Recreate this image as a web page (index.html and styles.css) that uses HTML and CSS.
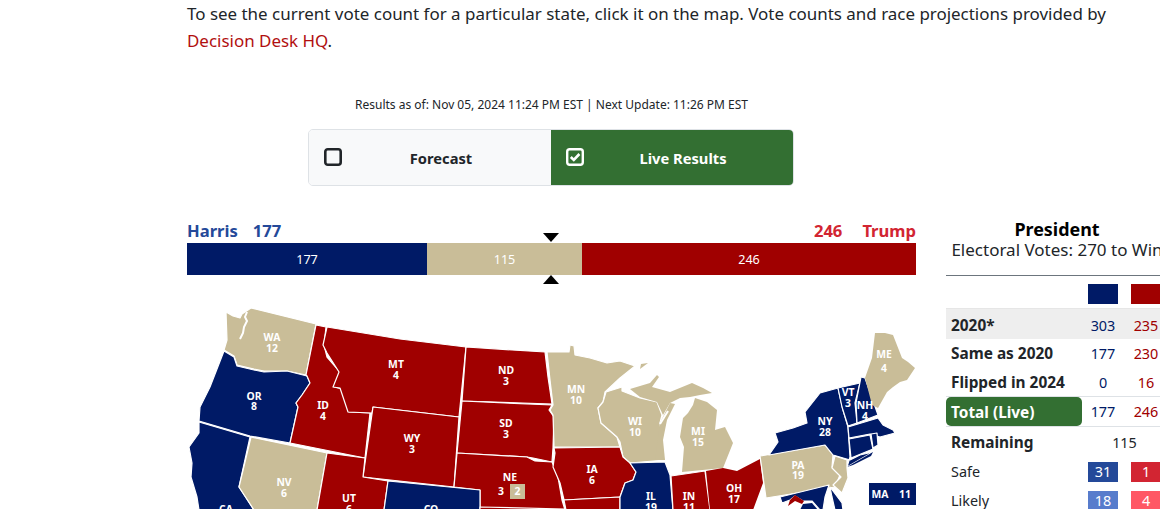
FILE: index.html
```html
<!DOCTYPE html>
<html lang="en">
<head>
<meta charset="utf-8">
<title>Live Results</title>
<link rel="stylesheet" href="styles.css">
</head>
<body>
<main class="page">
  <p class="intro">To see the current vote count for a particular state, click it on the map. Vote counts and race projections provided by <a href="#">Decision Desk HQ</a>.</p>
  <p class="asof">Results as of: Nov 05, 2024 11:24 PM EST | Next Update: 11:26 PM EST</p>
  <div class="toggle">
    <div class="opt opt-off">
      <svg class="check" viewBox="0 0 18 18"><rect x="1.3" y="1.3" width="15.4" height="15.4" rx="2.5" fill="none" stroke="#212529" stroke-width="2.6"/></svg>
      <span>Forecast</span>
    </div>
    <div class="opt opt-on">
      <svg class="check" viewBox="0 0 18 18"><rect x="1.2" y="1.2" width="15.6" height="15.6" rx="2.5" fill="none" stroke="#fff" stroke-width="2.4"/><path d="M4.8 9l3 3 5.6-6" fill="none" stroke="#fff" stroke-width="2.6"/></svg>
      <span>Live Results</span>
    </div>
  </div>
  <div class="columns">
    <section class="left">
      <div class="names">
        <div class="harris"><span>Harris</span><span>177</span></div>
        <div class="trump"><span>246</span><span>Trump</span></div>
      </div>
      <div class="bar">
        <div class="seg seg-d">177</div>
        <div class="seg seg-t">115</div>
        <div class="seg seg-r">246</div>
        <i class="mark mark-top"></i>
        <i class="mark mark-bot"></i>
      </div>
      <svg class="map" viewBox="187 300 729 209" width="729" height="209">
        <g class="states">
          <polygon class="t" points="226,312 233,316 240,318 242,314 251,308 316,324 306,375 287,371 264,371 254,369 237,365 234,356 224,350 227,340"/>
          <path class="inlet" d="M247,312l-2,5 2,4-3,6-1,6-3,6"/>
          <polygon class="d" points="224,351 234,357 237,366 254,370 264,372 287,371 307,376 310,383 302,395 296,403 298,407 290,443 250,436 199,421 200,407 210,387"/>
          <polygon class="d" points="199,422 250,437 239,487 254,510 199,510 197,497 191,477 192,463 189,447 199,433"/>
          <polygon class="t" points="251,437 327,453 317,510 254,510 239,487"/>
          <polygon class="r" points="316,325 326,327 324,345 327,357 340,372 334,387 342,389 349,412 370,413 365,458 290,443 298,407 296,403 302,395 310,383 307,376 306,375"/>
          <polygon class="r" points="327,327 400,339 466,347 459,417 373,407 372,413 348,412 340,388 333,387 339,372 327,353 323,345"/>
          <polygon class="r" points="373,407 459,417 454,487 363,477"/>
          <polygon class="r" points="466,347 545,352 548,377 552,404 462,401"/>
          <polygon class="r" points="462,401 552,405 549,410 554,417 553,448 552,462 533,458 527,457 457,453"/>
          <polygon class="r" points="457,453 527,457 535,461 552,462 558,477 562,500 565,510 480,510 480,490 454,487"/>
          <polygon class="r" points="327,453 365,458 363,477 388,481 384,510 317,510"/>
          <polygon class="d" points="388,481 480,490 480,510 384,510"/>
          <polygon class="r" points="480,507 565,509 566,510 480,510"/>
          <polygon class="t" points="547,352 569,352 570,345 574,346 575,355 590,358 607,363 620,361 635,366 620,378 605,392 603,402 598,408 601,423 617,437 620,447 554,447 553,415 550,410 553,405 550,380"/>
          <polygon class="t nostroke" points="641,364 648,363 640,369"/>
          <polygon class="t" points="606,392 622,387 622,391 640,398 657,402 662,415 660,423 665,460 630,463 623,457 620,442 617,437 601,423 598,408 603,402"/>
          <polygon class="t nostroke" points="660,423 670,403 675,404 667,420 663,440 665,460 655,460"/>
          <path class="inlet" d="M660,424l8-13"/>
          <polygon class="t nostroke" points="630,389 650,383 657,375 659,377 652,387 670,392 692,383 703,388 712,393 700,395 690,397 680,398 670,403 663,415 657,402 640,397"/>
          <polygon class="t nostroke" points="695,398 707,402 717,410 715,430 725,427 733,443 723,468 682,472 684,447 680,437 683,418 688,413 693,405"/>
          <polygon class="r" points="554,448 620,447 623,457 630,463 636,472 633,480 625,483 620,497 564,500 560,483 553,467 555,453"/>
          <polygon class="r" points="564,500 620,497 620,510 566,510"/>
          <polygon class="d" points="630,463 665,462 670,475 673,510 620,510 620,497 625,483 633,480 636,472"/>
          <polygon class="r" points="671,476 705,471 710,510 673,510"/>
          <polygon class="r nostroke" points="706,471 723,468 737,471 760,459 763,483 753,510 710,510"/>
          <polygon class="t" points="760,456 825,445 833,455 832,467 840,475 835,487 766,498"/>
          <polygon class="d" points="769,455 778,442 775,433 793,428 807,423 805,412 820,393 838,388 843,410 848,427 850,457 847,467 873,452 860,455 850,460 833,455 825,445"/>
          <polygon class="d" points="838,388 860,383 855,403 857,423 848,426 842,407"/>
          <polygon class="d" points="861,377 865,378 878,415 857,423 856,403"/>
          <polygon class="d" points="848,427 878,418 883,425 893,430 895,433 880,437 870,434 849,438"/>
          <polygon class="d" points="849,439 870,435 873,449 851,458"/>
          <polygon class="d" points="871,434 877,433 878,445 873,448"/>
          <polygon class="d nostroke" points="847,467 873,452 871,456 853,465"/>
          <polygon class="t nostroke" points="875,333 885,333 893,335 902,358 908,362 915,368 907,380 900,382 893,387 887,392 878,408 872,405 865,378 872,358"/>
          <polygon class="t" points="835,456 847,460 847,468 848,478 842,493 833,485 841,477 832,468"/>
          <polygon class="d" points="780,497 829,485 825,497 823,510 820,510 812,501 803,501 795,496 790,500 782,503"/>
          <polygon class="r nostroke" points="790,500 795,495 804,501 802,504 795,501 788,506"/>
          <polygon class="d nostroke" points="803,504 812,503 818,510 800,510"/>
          <polygon class="d" points="830,487 842,503 843,510 835,510 832,497"/>
        </g>
        <g class="labels">
          <text x="272" y="341">WA</text><text x="272" y="352">12</text>
          <text x="254" y="400">OR</text><text x="254" y="410">8</text>
          <text x="323" y="409">ID</text><text x="323" y="420">4</text>
          <text x="396" y="368">MT</text><text x="396" y="379">4</text>
          <text x="412" y="442">WY</text><text x="412" y="453">3</text>
          <text x="506" y="374">ND</text><text x="506" y="385">3</text>
          <text x="506" y="427">SD</text><text x="506" y="438">3</text>
          <text x="510" y="481">NE</text><text x="501" y="495">3</text>
          <text x="284" y="486">NV</text><text x="284" y="497">6</text>
          <text x="349" y="502">UT</text><text x="349" y="513">6</text>
          <text x="226" y="513">CA</text>
          <text x="431" y="513">CO</text>
          <text x="576" y="393">MN</text><text x="576" y="404">10</text>
          <text x="635" y="425">WI</text><text x="635" y="436">10</text>
          <text x="698" y="435">MI</text><text x="698" y="446">15</text>
          <text x="592" y="473">IA</text><text x="592" y="484">6</text>
          <text x="651" y="500">IL</text><text x="651" y="511">19</text>
          <text x="689" y="500">IN</text><text x="689" y="511">11</text>
          <text x="734" y="492">OH</text><text x="734" y="503">17</text>
          <text x="798" y="469">PA</text><text x="798" y="479">19</text>
          <text x="825" y="425">NY</text><text x="825" y="436">28</text>
          <text x="848" y="396">VT</text><text x="848" y="407">3</text>
          <text x="865" y="409">NH</text><text x="865" y="420">4</text>
          <text x="884" y="358">ME</text><text x="884" y="372">4</text>
        </g>
        <rect class="badge-ne" x="510" y="484" width="15" height="15"/>
        <text class="labels-one" x="517.5" y="495">2</text>
        <rect class="badge-ma" x="869" y="483" width="47" height="22"/>
        <text class="labels-ma" x="880" y="498">MA</text>
        <text class="labels-ma" x="905" y="498">11</text>
      </svg>
    </section>
    <aside class="right">
      <h2 class="title">President</h2>
      <div class="subtitle">Electoral Votes: 270 to Win</div>
      <div class="tbl">
        <div class="row head"><span></span><i class="sw sw-d"></i><i class="sw sw-r"></i></div>
        <div class="row row-2020"><b>2020*</b><span class="n nd">303</span><span class="n nr">235</span></div>
        <div class="row row-same"><b>Same as 2020</b><span class="n nd">177</span><span class="n nr">230</span></div>
        <div class="row row-flip"><b>Flipped in 2024</b><span class="n nd">0</span><span class="n nr">16</span></div>
        <div class="row row-total"><b class="pill">Total (Live)</b><span class="n nd">177</span><span class="n nr">246</span></div>
        <div class="row row-rem"><b>Remaining</b><span class="n span2">115</span></div>
        <div class="row row-cat"><span>Safe</span><span class="box b-safe-d">31</span><span class="box b-safe-r">1</span></div>
        <div class="row row-cat"><span>Likely</span><span class="box b-lik-d">18</span><span class="box b-lik-r">4</span></div>
      </div>
    </aside>
  </div>
</main>
</body>
</html>
```
FILE: styles.css
```css
html, body { margin: 0; height: 509px; overflow: hidden; background: #fff; }
body { font-family: "Noto Sans", sans-serif; color: #212529; }
.page { width: 1160px; height: 509px; padding-left: 187px; box-sizing: border-box; overflow: hidden; }
.intro { margin: 0; width: 940px; font-size: 16.96px; line-height: 27px; }
.intro a { color: #b10f0f; text-decoration: none; }
.asof { margin: 42px 0 0; width: 729px; text-align: center; font-size: 12px; line-height: 18px; }
.toggle { display: flex; width: 486px; height: 57px; margin: 15px 0 0 121px; box-sizing: border-box; border: 1px solid #dee2e6; border-radius: 5px; overflow: hidden; }
.opt { flex: 1; display: flex; align-items: center; padding-left: 15px; font-weight: 700; font-size: 14.7px; }
.opt span { flex: 1; text-align: center; padding-right: 11px; }
.opt-off { background: #f8f9fa; }
.opt-on { background: #336f32; color: #fff; }
.check { width: 18px; height: 18px; display: block; margin-top: -2px; flex: none; }
.columns { display: flex; gap: 30px; margin-top: 36px; align-items: flex-start; }
.left { width: 729px; flex: none; }
.names { display: flex; justify-content: space-between; font-weight: 700; font-size: 16.6px; line-height: 18px; height: 22px; }
.harris { color: #244999; display: flex; gap: 15px; }
.trump { color: #d22532; display: flex; gap: 20px; }
.bar { display: flex; height: 32px; position: relative; margin-top: -1px; font-size: 12.6px; color: #fff; }
.seg { display: flex; align-items: center; justify-content: center; }
.seg-d { width: 240px; background: #001a66; }
.seg-t { width: 155px; background: #c9bd98; }
.seg-r { width: 334px; background: #a00000; }
.mark { position: absolute; left: 356px; width: 0; height: 0; border-left: 8px solid transparent; border-right: 8px solid transparent; }
.mark-top { top: -10px; border-top: 9px solid #000; }
.mark-bot { bottom: -9px; border-bottom: 9px solid #000; }
.map { display: block; margin-top: 25px; overflow: hidden; }
.states polygon { stroke: #fff; stroke-width: 1.2; stroke-linejoin: round; }
.states polygon.nostroke { stroke: none; }
.inlet { fill: none; stroke: #fff; stroke-width: 2; }
.d { fill: #001a66; }
.r { fill: #a00000; }
.t { fill: #c9bd98; }
.labels text, .labels-one, .labels-ma { fill: #fff; font-size: 10.4px; font-weight: 700; text-anchor: middle; }
.badge-ne { fill: #c9bd98; }
.badge-ma { fill: #001a66; }
.right { width: 214px; flex: none; overflow: hidden; margin-top: -4px; }
.title { margin: 0; width: 222px; text-align: center; font-size: 17.9px; line-height: 22px; color: #000; font-weight: 700; }
.subtitle { width: 222px; text-align: center; font-size: 17px; line-height: 19px; white-space: nowrap; }
.tbl { margin-top: 16px; border-top: 1px solid #6c757d; width: 214px; overflow: hidden; }
.row { display: grid; grid-template-columns: 136px 6px 30px 13px 30px; align-items: center; font-size: 14.4px; }
.row b { font-size: 15.4px; }
.row > :nth-child(1) { grid-column: 1; padding-left: 5px; }
.row > :nth-child(2) { grid-column: 3; text-align: center; }
.row > :nth-child(3) { grid-column: 5; text-align: center; }
.head { height: 33px; border-bottom: 1px solid #e6e6e6; box-sizing: border-box; padding-top: 8px; }
.sw { display: block; height: 20px; align-self: start; }
.sw-d { background: #001a66; }
.sw-r { background: #a00000; }
.row-2020 { height: 30px; background: #eee; padding-top: 2px; box-sizing: border-box; }
.row-same { height: 29px; }
.row-flip { height: 29px; border-bottom: 1px solid #dee2e6; box-sizing: border-box; }
.row-total { height: 30px; border-bottom: 1px solid #dee2e6; box-sizing: border-box; }
.row .pill { background: #336f32; color: #fff; border-radius: 5px; height: 29px; line-height: 31px; }
.row-rem { height: 30px; }
.row .span2 { grid-column: 3 / 6; }
.row-cat { height: 29px; }
.nd { color: #001a66; }
.nr { color: #a00000; }
.box { height: 20px; line-height: 20px; color: #fff; }
.b-safe-d { background: #244999; }
.b-safe-r { background: #d22532; }
.b-lik-d { background: #577ccc; }
.b-lik-r { background: #ff5865; }
```
